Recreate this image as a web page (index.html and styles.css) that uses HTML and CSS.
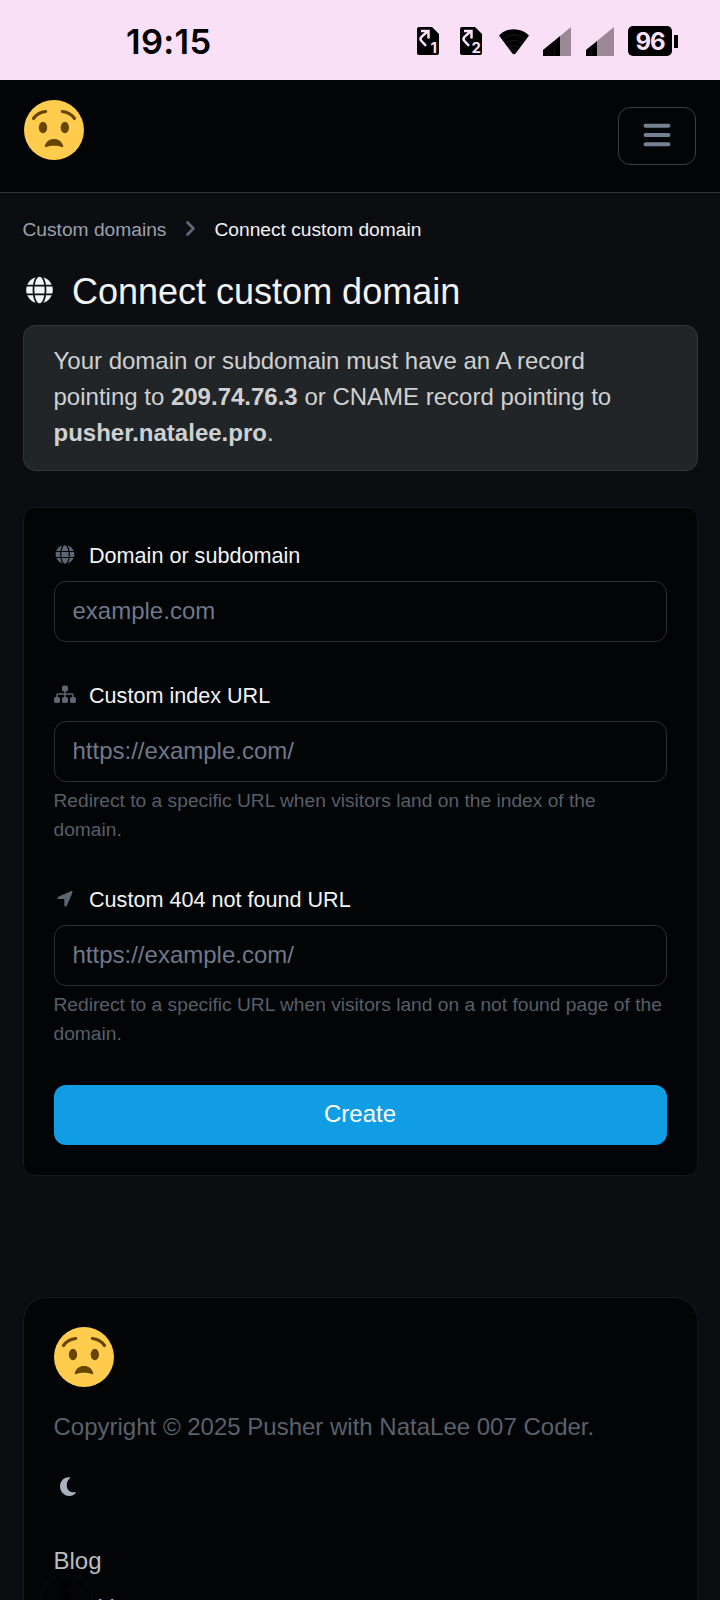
FILE: index.html
```html
<!DOCTYPE html>
<html lang="en">
<head>
<meta charset="utf-8">
<meta name="viewport" content="width=device-width">
<title>Connect custom domain</title>
<link rel="stylesheet" href="styles.css">
</head>
<body>
<svg class="defs" aria-hidden="true">
  <symbol id="globe" viewBox="-4 4 504 504"><path d="M336.500 160C322 70.700 287.800 8 248 8s-74 62.700-88.500 152h177zM152 256c0 22.200 1.200 43.500 3.300 64h185.300c2.100-20.500 3.300-41.800 3.300-64s-1.200-43.500-3.300-64H155.300c-2.100 20.500-3.300 41.800-3.300 64zm324.700-96c-28.600-67.900-86.500-120.400-158-141.600 24.400 33.800 41.200 84.700 50 141.600h108zM177.200 18.400C105.800 39.600 47.800 92.100 19.300 160h108c8.700-56.900 25.500-107.800 49.900-141.600zM487.400 192H372.700c2.100 21 3.300 42.500 3.300 64s-1.200 43-3.300 64h114.600c5.500-20.500 8.600-41.800 8.600-64s-3.100-43.500-8.500-64zM120 256c0-21.500 1.200-43 3.300-64H8.600C3.200 212.500 0 233.800 0 256s3.200 43.500 8.600 64h114.600c-2-21-3.200-42.500-3.200-64zm39.500 96c14.500 89.300 48.700 152 88.500 152s74-62.700 88.500-152h-177zm159.300 141.600c71.400-21.200 129.400-73.700 158-141.600h-108c-8.800 56.900-25.600 107.800-50 141.600zM19.300 352c28.600 67.900 86.500 120.400 158 141.600-24.400-33.800-41.200-84.700-50-141.600h-108z"/></symbol>
  <symbol id="face" viewBox="0 0 36 36">
    <circle cx="18" cy="18" r="18" fill="#ffcc4d"/>
    <g fill="#664500"><ellipse cx="11.400" cy="16.500" rx="2.500" ry="3.500"/><ellipse cx="24.500" cy="16.500" rx="2.500" ry="3.500"/>
    <path d="M12.500 27.500C13.200 25 15.300 23.400 18 23.400s4.800 1.600 5.500 4.100c.2.7-.3 1-.8.7-2.700-1.100-6.700-1.100-9.400 0-.5.3-1 0-.8-.7z"/></g>
    <path d="M5.700 11.100C7.500 8.600 10 7.200 13 6.900M23 6.900c3 .3 5.500 1.700 7.300 4.200" fill="none" stroke="#664500" stroke-width="1.900" stroke-linecap="round"/>
  </symbol>
  <symbol id="sim" viewBox="0 0 22 28"><path d="M2 0h13l7 7v19a2 2 0 0 1-2 2H2a2 2 0 0 1-2-2V2a2 2 0 0 1 2-2z"/><path d="M9 18.800L4.500 14Q2.500 11.800 4.500 9.800L11 4M4 4h7.500v7.500" fill="none" stroke="#fae0f7" stroke-width="2.500"/></symbol>
</svg>

<div class="status">
  <span class="time">19:15</span>
  <div class="indicators">
    <span class="sim"><svg><use href="#sim"/></svg><b>1</b></span>
    <span class="sim sim-two"><svg><use href="#sim"/></svg><b>2</b></span>
    <svg class="wifi" viewBox="0 0 30 27"><path d="M0 7.500C8-1 22-1 30 7.500L17 25c-1 1.600-3 1.600-4 0z"/><path d="M3.500 12c7-7 16-7 23 0M6.500 16c5-5 12-5 17 0M9.500 20c3-3 8-3 11 0" fill="none" stroke="#3a343a" stroke-width=".5"/></svg>
    <svg class="signal" viewBox="0 0 28 29"><path d="M28 0v29H0v-6z" fill="#9b8998"/><path d="M17 9.300V29H0v-6z"/><path d="M5.700 19v10M11.300 14v15" stroke="#332e33" stroke-width=".4"/></svg>
    <svg class="signal signal-two" viewBox="0 0 28 29"><path d="M28 0v29H0v-6z" fill="#9b8998"/><path d="M11 14.200V29H0v-6z"/><path d="M5.700 19v10" stroke="#332e33" stroke-width=".4"/></svg>
    <span class="battery">96</span><i class="battery-tip"></i>
  </div>
</div>

<header class="navbar">
  <svg class="face"><use href="#face"/></svg>
  <button class="toggler" aria-label="Menu"><svg viewBox="0 0 28 24"><path d="M2.500 2.700h23M2.500 12h23M2.500 21.300h23" fill="none" stroke="currentColor" stroke-width="3.900" stroke-linecap="round"/></svg></button>
</header>

<main class="container">
  <nav class="breadcrumb">
    <a>Custom domains</a>
    <svg viewBox="0 0 10 15"><path d="M1.500 1.500l6 6-6 6" fill="none" stroke="currentColor" stroke-width="2.600" stroke-linecap="round" stroke-linejoin="round"/></svg>
    <span>Connect custom domain</span>
  </nav>

  <h1 class="title"><svg><use href="#globe"/></svg>Connect custom domain</h1>

  <div class="alert">Your domain or subdomain must have an A record pointing to <b>209.74.76.3</b> or CNAME record pointing to <b>pusher.natalee.pro</b>.</div>

  <form class="card">
    <div class="group">
      <label><svg class="icon"><use href="#globe"/></svg>Domain or subdomain</label>
      <input type="text" placeholder="example.com">
    </div>
    <div class="group">
      <label><svg class="icon" viewBox="0 0 22 18"><rect x="8" y="0" width="6" height="6" rx="1.800"/><rect x="0" y="11.500" width="6" height="6" rx="1.800"/><rect x="8" y="11.500" width="6" height="6" rx="1.800"/><rect x="16" y="11.500" width="6" height="6" rx="1.800"/><path d="M11 5v7M3 12V9.500q0-1 1-1h14q1 0 1 1V12" fill="none" stroke="currentColor" stroke-width="1.500"/></svg>Custom index URL</label>
      <input type="text" placeholder="https://example.com/">
      <small>Redirect to a specific URL when visitors land on the index of the domain.</small>
    </div>
    <div class="group">
      <label><svg class="icon arrow" viewBox="0 0 16 17"><path d="M14.200.2L.9 6.200C-.5 6.900-.1 8.600 1.300 8.600h6v6.500c0 1.500 2 1.900 2.600.5L15.800 2C16.300.8 15.300-.3 14.200.2z"/></svg>Custom 404 not found URL</label>
      <input type="text" placeholder="https://example.com/">
      <small>Redirect to a specific URL when visitors land on a not found page of the domain.</small>
    </div>
    <button type="button" class="submit">Create</button>
  </form>

  <footer class="footer">
    <svg class="face"><use href="#face"/></svg>
    <p class="copyright">Copyright © 2025 Pusher with NataLee 007 Coder.</p>
    <svg class="moon" viewBox="0 0 16 19"><path d="M9.700.2C4.200-.5 0 4 0 9.300 0 14.600 4.100 19 9.400 19c2.600 0 4.800-1 6.400-2.900.4-.5.1-1-.5-.9C9.800 16.200 6.800 12.500 6.800 8.200c0-3 1.100-5.400 3.200-7 .4-.3.300-.9-.3-1z"/></svg>
    <a class="link">Blog</a>
    <a class="link">Cookies</a>
  </footer>
</main>

<svg class="info" viewBox="0 0 54 54"><circle cx="27" cy="27" r="26" fill="#030405" stroke="#08090a" stroke-width="1.500"/><circle cx="27" cy="12.500" r="4" fill="#000"/><path d="M22 23h6v18" fill="none" stroke="#000" stroke-width="6"/></svg>
</body>
</html>
```
FILE: styles.css
```css
* { box-sizing: border-box; }
html { overflow: hidden; }
body {
  margin: 0;
  height: 1600px;
  overflow: hidden;
  position: relative;
  background: #0c0d11;
  color: #f2f3f5;
  font: 24px/36px "Liberation Sans", Arial, sans-serif;
}
svg { display: block; fill: currentColor; flex: none; }
.defs { position: absolute; width: 0; height: 0; }

.status {
  height: 80px;
  padding: 2px 42px 0 126px;
  display: flex;
  align-items: center;
  justify-content: space-between;
  background: #fae0f7;
  color: #000;
  font-family: Inter, sans-serif;
}
.time { padding-top: 2px; font-size: 34.500px; font-weight: 600; letter-spacing: .3px; }
.indicators { display: flex; align-items: center; }
.sim { position: relative; width: 22px; height: 28px; margin-right: 21px; }
.sim svg { width: 22px; height: 28px; }
.sim b {
  position: absolute;
  right: 2px;
  bottom: 1px;
  font-size: 15px;
  line-height: 13px;
  color: #fae0f7;
}
.sim-two { margin-right: 17px; }
.sim-two b { right: 1px; }
.wifi { width: 30px; height: 27px; margin-right: 14px; }
.signal { width: 28px; height: 29px; margin-right: 15px; }
.signal-two { margin-right: 14px; }
.battery {
  width: 44px;
  height: 30px;
  border-radius: 5px;
  background: #000;
  color: #fae0f7;
  font-size: 24px;
  font-weight: 700;
  line-height: 32px;
  text-align: center;
  letter-spacing: -1px;
}
.battery-tip { width: 4px; height: 13px; margin-left: 2px; background: #000; }

.navbar {
  height: 113px;
  padding: 20px 24px 0;
  display: flex;
  justify-content: space-between;
  background: #030406;
  border-bottom: 1px solid #333438;
}
.face { width: 60px; height: 60px; }
.toggler {
  width: 78px;
  height: 58px;
  margin-top: 7px;
  padding: 0;
  display: grid;
  place-items: center;
  background: none;
  border: 1px solid #3c3d42;
  border-radius: 12px;
  color: #768092;
}
.toggler svg { width: 28px; height: 24px; margin-top: -2px; }

.container { padding: 22px 22px 0 23px; }
.breadcrumb {
  display: flex;
  align-items: center;
  height: 29px;
  margin-left: -.5px;
  font-size: 19.200px;
  color: #9ba1aa;
}
.breadcrumb svg { width: 10px; height: 15px; margin: -2px 18.500px 0 19.500px; color: #5f6979; }
.breadcrumb span { color: #f2f3f5; }

.title {
  display: flex;
  align-items: center;
  height: 43px;
  margin: 26px 0 12px;
  padding-left: 3px;
  font-size: 36px;
  font-weight: 400;
  line-height: 43px;
}
.title svg { width: 27px; height: 28px; margin: -3px 19px 0 0; }

.alert {
  height: 146px;
  padding: 17px 29.500px;
  border: 1px solid #303438;
  border-radius: 12px;
  background: #222528;
  color: #ced0d2;
}

.card {
  height: 669px;
  margin-top: 36px;
  padding: 30px;
  border: 1px solid #17181c;
  border-radius: 12px;
  background: #030406;
}
.group { margin-bottom: 36px; }
.group + .group + .group { margin: 38px 0 37px; }
.group label {
  display: flex;
  align-items: center;
  height: 34px;
  margin-bottom: 9px;
  padding-top: 2px;
  font-size: 21.600px;
}
.icon { width: 22px; height: 19px; margin: -4px 13px 0 0; color: #5d6673; }
.arrow { height: 16px; margin-top: -3px; }
.group input {
  display: block;
  width: 100%;
  height: 61px;
  padding: 0 18px 2px 17.500px;
  border: 1px solid #2d2e32;
  border-radius: 12px;
  background: transparent;
  font: inherit;
}
.group input::placeholder { color: #6f788a; opacity: 1; }
.group small {
  display: block;
  margin: 5px 0 0 -.5px;
  font-size: 19.200px;
  line-height: 28.500px;
  color: #585e68;
}
.submit {
  display: block;
  width: 100%;
  height: 60px;
  padding: 0 1px 2px 0;
  border: 0;
  border-radius: 12px;
  background: #119de4;
  color: #fff;
  font: inherit;
}

.footer {
  height: 400px;
  margin-top: 121px;
  padding: 29px 29.500px;
  border: 1px solid #17181c;
  border-radius: 24px;
  background: #030406;
}
.footer .face { margin-left: .5px; }
.copyright { margin: 22px 0 0; color: #5a606c; }
.moon { width: 16px; height: 19px; margin: 32px 0 47px 6.500px; color: #a9b0be; }
.link { display: block; height: 47px; color: #b9bcc2; }
.info { position: absolute; left: 39px; top: 1573px; width: 54px; height: 54px; }
```
